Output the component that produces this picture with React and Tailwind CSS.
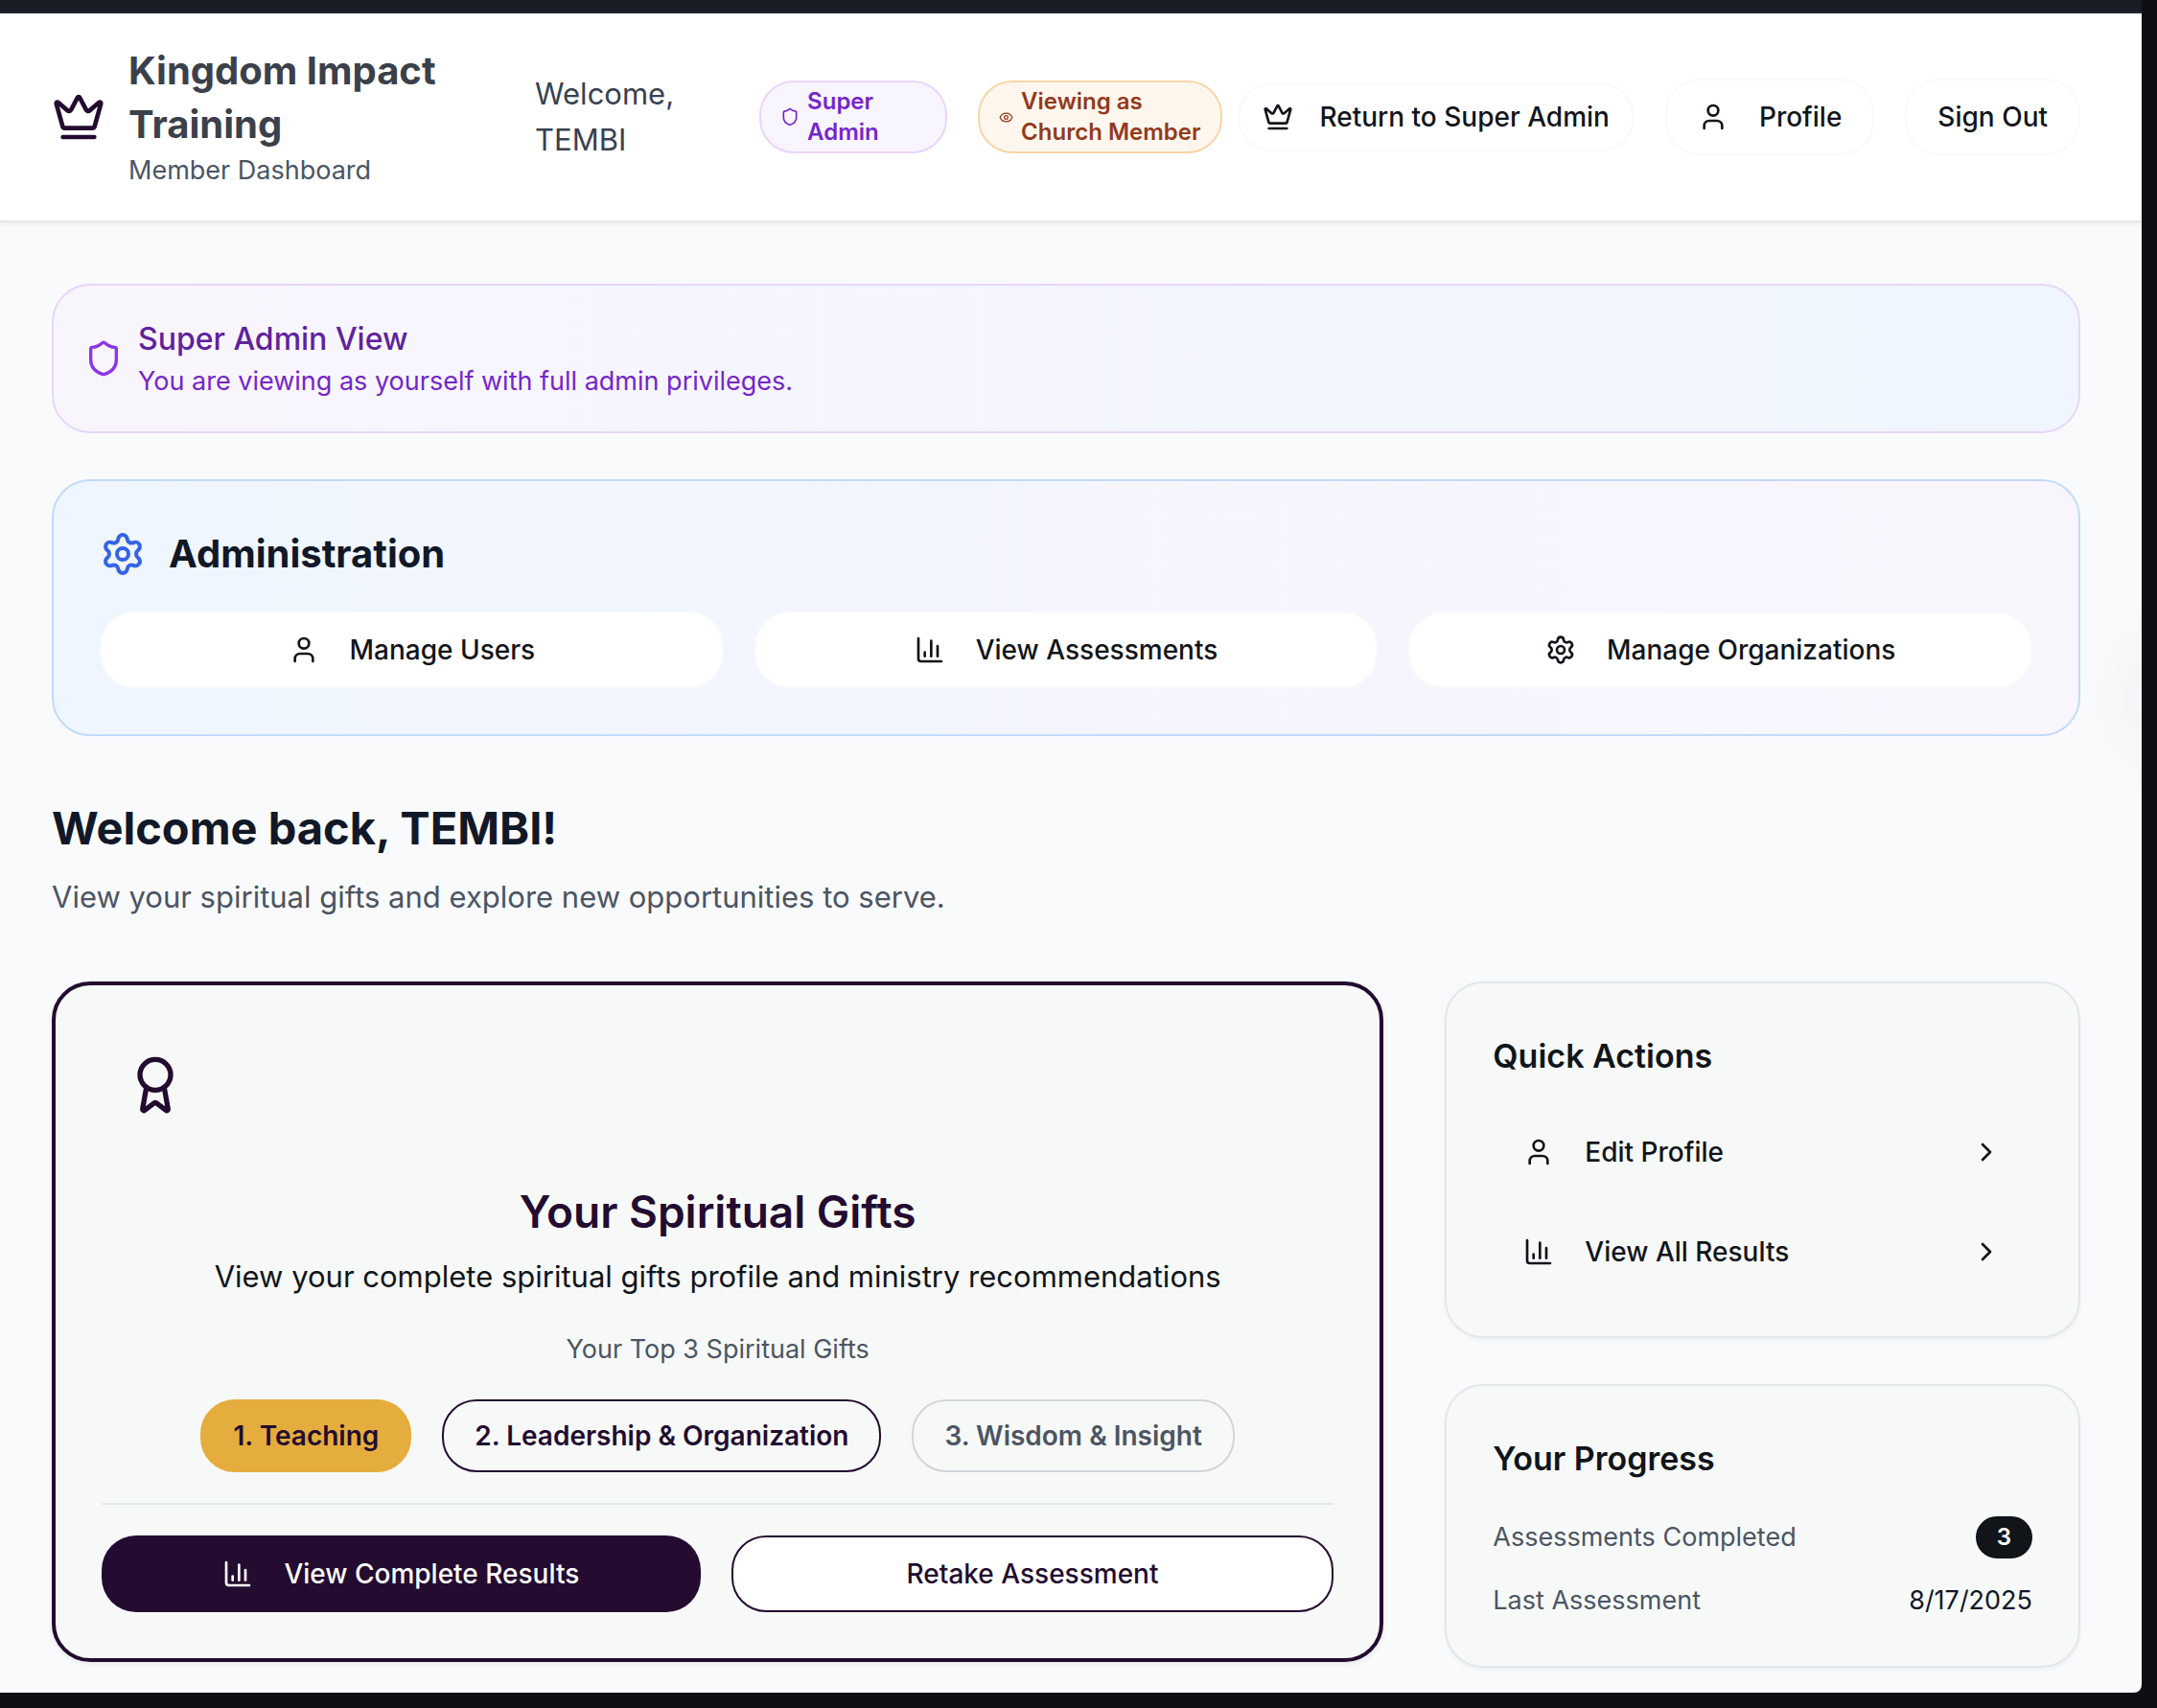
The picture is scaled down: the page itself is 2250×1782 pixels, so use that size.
import React from "react";
import { Award, ChartColumn, ChevronRight, Crown, Eye, Settings, Shield, User } from "lucide-react";

const outlineButton =
  "flex shrink-0 items-center justify-center whitespace-nowrap rounded-[36px] border-2 border-[#f9fafa] bg-white text-[28px] leading-10 font-medium text-[#11151a]";

function TopBar() {
  return <div className="h-[14px] border-b-2 border-[#22252f] bg-[#191c24]" />;
}

function Header() {
  return (
    <header className="relative flex items-center justify-between border-b-2 border-[#e5e7eb] bg-white py-8 pr-16 pl-[54px] shadow-[0_2px_4px_rgba(0,0,0,0.05)]">
      <div className="flex items-center gap-6">
        <Crown className="size-14 shrink-0 text-[#230c30]" />
        <div className="w-[340px]">
          <h1 className="text-[40px] leading-[56px] font-bold text-[#3b404b]">Kingdom Impact Training</h1>
          <p className="text-[27px] leading-10 text-[#4b5563]">Member Dashboard</p>
        </div>
      </div>
      <div className="flex items-center gap-8">
        <span className="w-[202px] pr-10 text-[31px] leading-[48px] text-[#374151]">Welcome, TEMBI</span>
        <div className="flex w-[196px] items-center gap-2 rounded-[36px] border-2 border-[#e9d5ff] bg-[#f8f5ff] px-5 py-1 text-2xl font-semibold text-[#7526c9]">
          <Shield className="size-5 shrink-0" />
          <span>Super Admin</span>
        </div>
        <div className="flex items-center gap-4">
          <div className="flex items-center gap-2 rounded-[36px] border-2 border-[#f9d5a7] bg-[#fff7ed] px-5 py-1 text-2xl font-semibold text-[#93391b]">
            <Eye className="size-[15px] shrink-0" />
            <span>
              Viewing as
              <br />
              Church Member
            </span>
          </div>
          <button type="button" className={outlineButton + " h-[72px] gap-7 px-6"}>
            <Crown className="size-8" />
            Return to Super Admin
          </button>
        </div>
        <button type="button" className={outlineButton + " h-20 gap-8 px-8"}>
          <User className="size-8" />
          Profile
        </button>
        <button type="button" className={outlineButton + " h-20 px-8"}>Sign Out</button>
      </div>
    </header>
  );
}

function SuperAdminBanner() {
  return (
    <section className="flex items-center gap-4 rounded-[40px] border-2 border-[#e7d6fc] bg-linear-to-r from-[#f9f5fd] to-[#eff6ff] p-8">
      <Shield className="size-10 shrink-0 text-[#8b36e4]" />
      <div>
        <h2 className="text-[32px] leading-[48px] font-medium text-[#5f229c]">Super Admin View</h2>
        <p className="text-[27px] leading-10 text-[#7526c9]">
          You are viewing as yourself with full admin privileges.
        </p>
      </div>
    </section>
  );
}

const adminActions = [
  { label: "Manage Users", Icon: User },
  { label: "View Assessments", Icon: ChartColumn },
  { label: "Manage Organizations", Icon: Settings },
];

function Administration() {
  return (
    <section className="mt-12 rounded-[40px] border-2 border-[#c1dafc] bg-linear-to-r from-[#eff6ff] to-[#f9f5fd] p-12">
      <div className="flex items-center gap-6">
        <Settings className="size-12 text-[#3463e6]" />
        <h2 className="text-[40px] leading-[56px] font-bold text-[#111827]">Administration</h2>
      </div>
      <div className="mt-8 grid grid-cols-3 gap-8">
        {adminActions.map(({ label, Icon }) => (
          <button key={label} type="button" className={outlineButton + " h-20 gap-8 px-8"}>
            <Icon className="size-8" />
            {label}
          </button>
        ))}
      </div>
    </section>
  );
}

const pill = "rounded-[36px] border-2 px-8 py-4 text-[28px] leading-10 font-semibold whitespace-nowrap";

function SpiritualGifts() {
  return (
    <section className="col-span-2 rounded-[40px] border-4 border-[#230c30] bg-[#f7f9f8] p-12 shadow-[0_2px_6px_rgba(0,0,0,0.08)]">
      <div className="w-fit p-6">
        <Award className="size-16 text-[#230c30]" />
      </div>
      <h3 className="mt-11 text-center text-[46px] leading-[64px] font-semibold text-[#230c30]">Your Spiritual Gifts</h3>
      <p className="mt-3 text-center text-[31px] leading-[48px] text-[#11151a]">
        View your complete spiritual gifts profile and ministry recommendations
      </p>
      <p className="mt-8 text-center text-[27px] leading-10 text-[#4b5563]">Your Top 3 Spiritual Gifts</p>
      <div className="mt-8 flex justify-center gap-8">
        <span className={pill + " border-[#e5ad3d] bg-[#e5ad3d] text-[#230c30]"}>1. Teaching</span>
        <span className={pill + " border-[#230c30] text-[#230c30]"}>2. Leadership &amp; Organization</span>
        <span className={pill + " border-[#d1d5db] text-[#4b5563]"}>3. Wisdom &amp; Insight</span>
      </div>
      <div className="mt-8 flex gap-8 border-t-2 border-[#e1e8eb] pt-8">
        <button
          type="button"
          className="flex h-20 flex-1 items-center justify-center gap-8 rounded-[36px] bg-[#230c30] px-8 text-[28px] font-medium text-white"
        >
          <ChartColumn className="size-8" />
          View Complete Results
        </button>
        <button
          type="button"
          className="h-20 flex-1 rounded-[36px] border-2 border-[#230c30] bg-white px-8 text-[28px] font-medium text-[#230c30]"
        >
          Retake Assessment
        </button>
      </div>
    </section>
  );
}

const sideCard =
  "rounded-[40px] border-2 border-[#e1e8eb] bg-[#f7f9f8] p-12 shadow-[0_2px_4px_rgba(0,0,0,0.05)]";

function QuickActions() {
  const items = [
    { label: "Edit Profile", Icon: User },
    { label: "View All Results", Icon: ChartColumn },
  ];
  return (
    <section className={sideCard}>
      <h3 className="text-[34px] leading-[56px] font-semibold text-[#11151a]">Quick Actions</h3>
      <div className="mt-8 flex flex-col gap-6">
        {items.map(({ label, Icon }) => (
          <button
            key={label}
            type="button"
            className="flex h-20 items-center gap-8 rounded-[36px] px-8 text-[28px] font-medium text-[#11151a]"
          >
            <Icon className="size-8" />
            {label}
            <ChevronRight className="ml-auto size-8" />
          </button>
        ))}
      </div>
    </section>
  );
}

function Progress() {
  return (
    <section className={sideCard}>
      <h3 className="text-[34px] leading-[56px] font-semibold text-[#11151a]">Your Progress</h3>
      <dl className="mt-8 flex flex-col gap-6 text-[27px] leading-10">
        <div className="flex items-center justify-between">
          <dt className="text-[#4b5563]">Assessments Completed</dt>
          <dd className="rounded-full border-2 border-[#11151a] bg-[#11151a] px-5 py-1 text-2xl font-semibold text-white">
            3
          </dd>
        </div>
        <div className="flex items-center justify-between">
          <dt className="text-[#4b5563]">Last Assessment</dt>
          <dd className="text-[#111827]">8/17/2025</dd>
        </div>
      </dl>
    </section>
  );
}

export default function App() {
  return (
    <div className="min-h-screen bg-[#0e0f14] pr-4 pb-4 font-[Inter,sans-serif]">
      <div className="relative overflow-hidden rounded-br-lg bg-[#f9fafc]">
        <TopBar />
        <Header />
        <main className="pt-16 pr-16 pb-[26px] pl-[54px]">
          <SuperAdminBanner />
          <Administration />
          <h2 className="mt-16 text-[47px] leading-[64px] font-bold text-[#111827]">Welcome back, TEMBI!</h2>
          <p className="mt-4 text-[31px] leading-[48px] text-[#4b5563]">
            View your spiritual gifts and explore new opportunities to serve.
          </p>
          <div className="mt-16 grid grid-cols-3 items-start gap-16">
            <SpiritualGifts />
            <div className="flex flex-col gap-12">
              <QuickActions />
              <Progress />
            </div>
          </div>
        </main>
        <div className="absolute top-[670px] -right-4 h-[120px] w-4 rounded-full shadow-[0_0_70px_rgba(0,0,0,0.12)]" />
      </div>
    </div>
  );
}
